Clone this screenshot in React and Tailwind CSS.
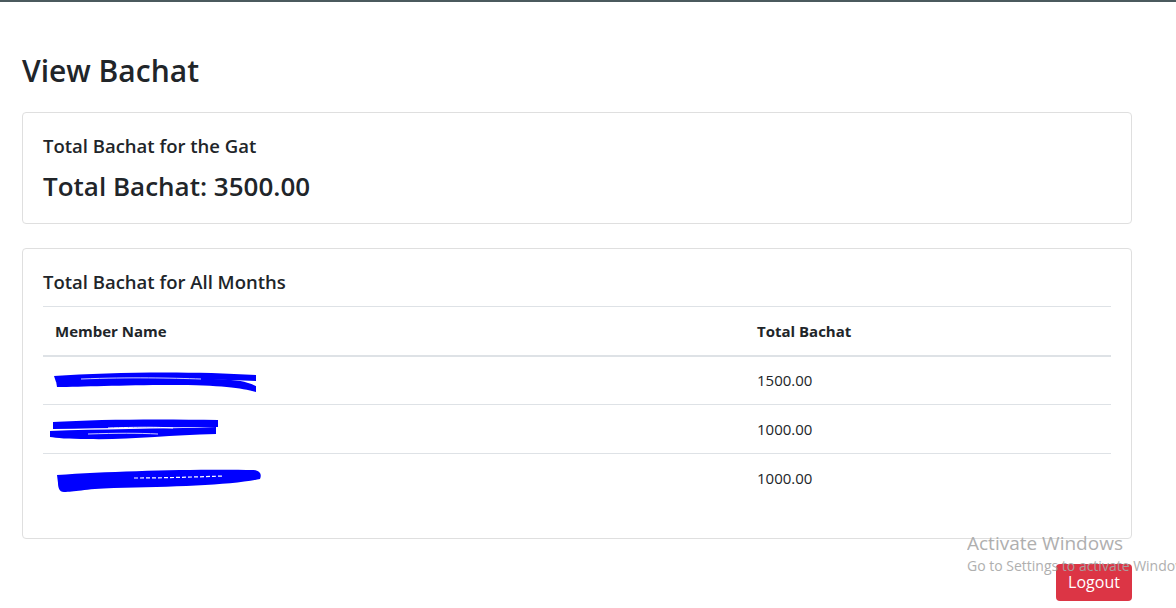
import React from 'react';

const rows = [
  { amount: '1500.00', scribble: 1 },
  { amount: '1000.00', scribble: 2 },
  { amount: '1000.00', scribble: 3 },
];

const Scribble = ({ kind }) => {
  if (kind === 1) {
    return (
      <svg width="215" height="26" viewBox="0 0 215 26" className="absolute left-[8px] top-[11px]">
        <path d="M3 8 C60 4 140 3 205 7 L205 13 C140 10 60 12 5 14 Z" fill="#0000ff" />
        <path d="M5 13 C70 11 140 9 180 12 C195 13 200 16 205 18 L205 24 C190 20 170 17 120 17 C70 17 30 19 6 19 Z" fill="#0000ff" />
        <path d="M30 11 C80 9 120 10 150 11" stroke="#ffffff" strokeWidth="0.8" fill="none" />
      </svg>
    );
  }
  if (kind === 2) {
    return (
      <svg width="180" height="30" viewBox="0 0 180 30" className="absolute left-[5px] top-[12px]">
        <path d="M5 5 C50 2 120 2 170 3 L170 10 C120 10 60 11 5 12 Z" fill="#0000ff" />
        <path d="M2 14 C50 12 110 12 168 10 L168 17 C120 18 80 23 40 22 C20 22 8 21 2 20 Z" fill="#0000ff" />
        <path d="M60 11 C90 10 110 10 125 11" stroke="#ffffff" strokeWidth="1" fill="none" />
        <path d="M40 17 C70 16 90 16 110 17" stroke="#ffffff" strokeWidth="0.8" fill="none" />
      </svg>
    );
  }
  return (
    <svg width="215" height="32" viewBox="0 0 215 32" className="absolute left-[11px] top-[11px]">
      <path d="M3 10 C60 6 140 4 200 5 C206 6 208 9 206 14 C180 20 120 22 60 23 C30 24 20 27 10 27 C5 27 4 22 4 18 Z" fill="#0000ff" />
      <path d="M80 13 C110 13 140 12 170 11" stroke="#ffffff" strokeWidth="1.2" strokeDasharray="4 2" fill="none" />
    </svg>
  );
};

export default function App() {
  return (
    <div className="relative min-h-[608px] w-full bg-white font-['Segoe_UI','Open_Sans',sans-serif] text-[#212529]">
      <div className="h-[2px] w-full bg-[#4b5a5e]" />
      <div className="px-[22px] pt-[50px]">
        <h2 className="mb-[22px] text-[30px] leading-[38px] font-semibold">View Bachat</h2>

        <div className="w-[1110px] rounded border border-[#dfdfdf] px-[20px] pt-[21px] pb-[20px]">
          <h5 className="mb-[11px] text-[18.5px] leading-[24px] font-semibold">Total Bachat for the Gat</h5>
          <h4 className="text-[26px] leading-[34px] font-semibold">Total Bachat: 3500.00</h4>
        </div>

        <div className="mt-[24px] w-[1110px] rounded border border-[#dfdfdf] px-[20px] pt-[21px] pb-[19px]">
          <h5 className="mb-[12px] text-[18.5px] leading-[24px] font-semibold">Total Bachat for All Months</h5>
          <table className="mb-[16px] w-full border-collapse text-[15px]">
            <thead>
              <tr className="border-t border-b-2 border-t-[#dee2e6] border-b-[#dee2e6]">
                <th className="h-[49px] w-[702px] px-[12px] text-left font-bold">Member Name</th>
                <th className="h-[49px] px-[12px] text-left font-bold">Total Bachat</th>
              </tr>
            </thead>
            <tbody>
              {rows.map((r, i) => (
                <tr key={i} className={i > 0 ? 'border-t border-[#dee2e6]' : ''}>
                  <td className="relative h-[49px] px-[12px]">
                    <Scribble kind={r.scribble} />
                  </td>
                  <td className="h-[49px] px-[12px]">{r.amount}</td>
                </tr>
              ))}
            </tbody>
          </table>
        </div>

        <div className="mt-[25px] flex w-[1110px] justify-end">
          <button className="h-[37px] w-[76px] rounded bg-[#dc3545] text-[16px] text-white">Logout</button>
        </div>
      </div>

      <div className="pointer-events-none absolute left-[967px] top-[530px] font-['Segoe_UI','Open_Sans',sans-serif] text-[#a7a7a7] opacity-90">
        <div className="text-[19px] leading-[26px] whitespace-nowrap">Activate Windows</div>
        <div className="text-[14px] leading-[20px] whitespace-nowrap">Go to Settings to activate Windows.</div>
      </div>
    </div>
  );
}
